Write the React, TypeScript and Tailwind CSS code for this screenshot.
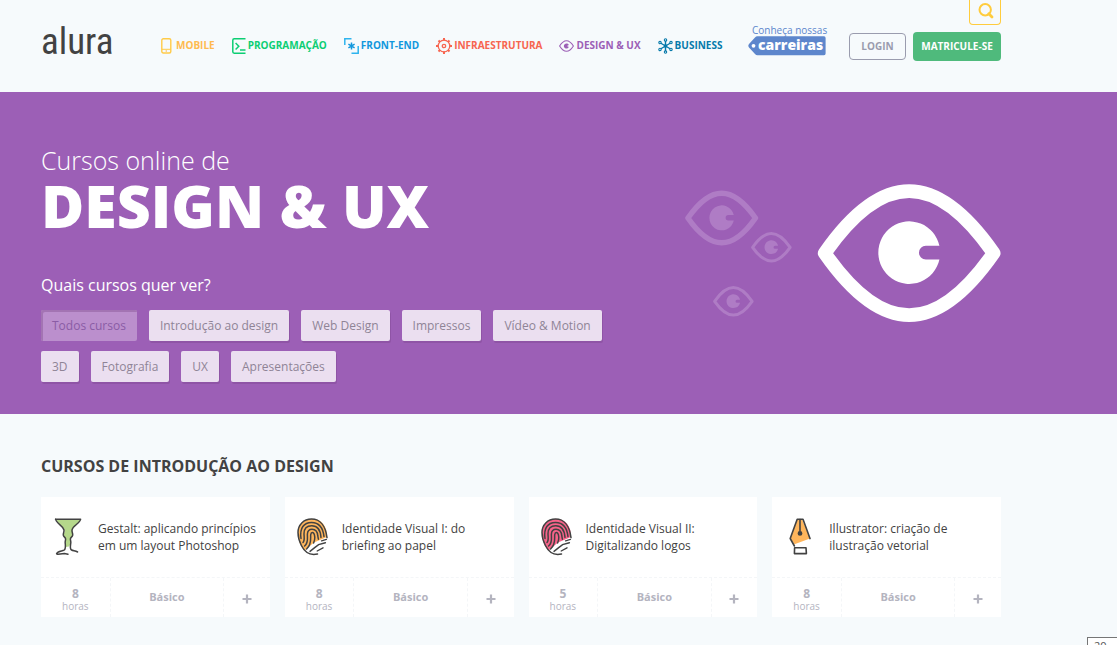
import type { ReactNode } from "react";

type NavItem = { label: string; color: string; icon: ReactNode };

const nav: NavItem[] = [
  {
    label: "MOBILE",
    color: "text-[#ffba4f] gap-1",
    icon: (
      <svg width="11" height="16" viewBox="0 0 11 16" fill="none" stroke="#ffcb48" aria-hidden="true">
        <rect x="0.8" y="0.8" width="9" height="14.2" rx="1.5" strokeWidth="1.4" />
        <path d="M1 11.3h9" strokeWidth="1" />
        <rect x="4.6" y="12.4" width="1.4" height="1.2" fill="#ffba4f" stroke="none" />
      </svg>
    ),
  },
  {
    label: "PROGRAMAÇÃO",
    color: "text-[#0cce73] gap-[2px]",
    icon: (
      <svg width="14" height="16" viewBox="0 0 14 16" fill="none" stroke="currentColor" strokeWidth="1.5" aria-hidden="true">
        <path d="M13.5 0.8H2.2Q0.8 0.8 0.8 2.2V13.8Q0.8 15.2 2.2 15.2H13.5M13.5 12H8" />
        <path d="M3.6 5L6.8 8.2L3.6 11.5" />
      </svg>
    ),
  },
  {
    label: "FRONT-END",
    color: "text-[#1197dd] gap-[2px]",
    icon: (
      <svg width="15" height="16" viewBox="0 0 15 16" fill="none" stroke="currentColor" strokeWidth="1.5" aria-hidden="true">
        <path d="M0.8 7V0.8H7.5M14.2 8V15.2H7.5" stroke="#2eb4ee" />
        <path d="M7.5 4.4V11.6M4.4 6.2L10.6 9.8M10.6 6.2L4.4 9.8" />
      </svg>
    ),
  },
  {
    label: "INFRAESTRUTURA",
    color: "text-[#f76550] gap-[2px]",
    icon: (
      <svg width="16" height="16" viewBox="0 0 16 16" fill="none" stroke="currentColor" aria-hidden="true">
        <circle cx="8" cy="8" r="5.8" strokeWidth="1.3" />
        <circle cx="8" cy="8" r="1.7" strokeWidth="1.3" />
        <path
          d="M8 0V2.4M8 13.6V16M0 8H2.4M13.6 8H16M2.5 2.5L4 4M12 12L13.5 13.5M13.5 2.5L12 4M4 12L2.5 13.5"
          strokeWidth="2"
        />
      </svg>
    ),
  },
  {
    label: "DESIGN & UX",
    color: "text-[#9c5fb6] gap-[2px]",
    icon: (
      <svg width="15" height="12" viewBox="0 0 15 12" fill="none" stroke="currentColor" aria-hidden="true">
        <path d="M0.6 6C3 2.2 5.2 0.7 7.5 0.7S12 2.2 14.4 6C12 9.8 9.8 11.3 7.5 11.3S3 9.8 0.6 6Z" strokeWidth="1.1" strokeLinejoin="round" />
        <path d="M9.9 5.2A2.6 2.6 0 1 0 9.9 6.8H8.6V5.2Z" fill="currentColor" stroke="none" />
      </svg>
    ),
  },
  {
    label: "BUSINESS",
    color: "text-[#077aab] gap-[2px]",
    icon: (
      <svg width="15" height="16" viewBox="0 0 15 16" fill="none" stroke="currentColor" aria-hidden="true">
        <path d="M7.5 2.5V13.5M2.5 5L12.5 11M12.5 5L2.5 11" strokeWidth="1.4" />
        <circle cx="7.5" cy="8" r="1.8" fill="currentColor" stroke="none" />
        <g fill="#f6fafc" strokeWidth="1.1">
          <circle cx="7.5" cy="1.9" r="1.2" />
          <circle cx="7.5" cy="14.1" r="1.2" />
          <circle cx="2" cy="4.6" r="1.2" />
          <circle cx="13" cy="4.6" r="1.2" />
          <circle cx="2" cy="11.4" r="1.2" />
          <circle cx="13" cy="11.4" r="1.2" />
        </g>
      </svg>
    ),
  },
];

const filters = [
  "Todos cursos",
  "Introdução ao design",
  "Web Design",
  "Impressos",
  "Vídeo & Motion",
  "3D",
  "Fotografia",
  "UX",
  "Apresentações",
];

function Vase() {
  return (
    <svg width="42" height="38" viewBox="0 0 42 38" fill="none" stroke="#424242" strokeWidth="1.5" strokeLinecap="round" strokeLinejoin="round" aria-hidden="true">
      <path d="M8.5 1.5H32.5C31.5 6 26 7.5 24.5 12C23.6 14.5 25.2 15.8 25 17.5C24.8 19.3 22.6 19.5 22.8 21C23.2 23 23 26 21 28.5L17.5 29V21C17.7 19.5 15.6 19.3 15.4 17.5C15.2 15.8 17.4 14.5 16.5 12C15 7.5 9.5 6 8.5 1.5Z" fill="#b5d88b" stroke="none" />
      <path d="M7.6 1.2H32.6L31.8 3C29.8 6.5 24.6 8 24 12C23.7 14 25 15.5 24.7 17.2C24.4 19 22.4 19.4 22.4 21C22.4 22.4 23 23.5 22.8 25C22.4 28 21.6 31 23.6 32C25.2 32.8 27.4 32.8 29.6 34" />
      <path d="M7.6 1.2L8.4 3C10.2 6.5 15.2 8 16 12C16.3 14 15 15.5 15.3 17.2C15.6 19 17.6 19.4 17.6 21C17.6 22.4 17 23.5 17.2 25C17.6 28 18 31 16 32.2C14 33.2 9.5 33.2 8.6 35.6Q8.6 36.4 10 36.2L16.5 35.6L20 36.2" />
    </svg>
  );
}

function Fingerprint({ color }: { color: string }) {
  return (
    <svg width="42" height="38" viewBox="0 0 42 38" fill="none" stroke="#424242" strokeWidth="1.5" strokeLinecap="round" aria-hidden="true">
      <path d="M20 1C11 1 6 7.5 6 15C6 22 8.5 29 12.5 32.5L22 24.5L35 19C35 8 30 1 20 1Z" fill={color} stroke="none" />
      <path d="M25.5 36C17 38 12.4 33.5 9.4 27.5C7.4 23.5 6 19 6 14.5C6 7 11.5 1 19.6 1C28 1 33.6 8 35 19.6" />
      <path d="M9 20.5C7.4 10 12 4.4 19.5 4.4C26.8 4.4 31 9.5 32 18.6" />
      <path d="M11 24.5C13 22.5 12 19 12 15.8C12 10.8 15 7.8 19.8 7.8C25 7.8 28.4 11.4 29 19.4" />
      <path d="M12.6 28C16.8 24.4 15.2 19.6 15.4 16C15.6 12.8 17.2 11.2 20 11.2C23.6 11.2 25.6 14 25.8 18L26.4 21.2" />
      <path d="M14.6 31C20 26.4 18.4 20.4 18.7 16.8C18.9 15.2 19.3 14.6 20.2 14.6C22.2 14.6 22.6 17 22.8 19.4C22.9 21.4 22.4 23 21.6 25" />
      <path d="M18 33.4L23 29.4L26.6 26.6L33.4 24.8M25.2 33L31 29.8M29.6 22.8L34.4 21.4" strokeWidth="1.4" />
    </svg>
  );
}

function Pen() {
  return (
    <svg width="42" height="38" viewBox="0 0 42 38" fill="none" stroke="#424242" strokeWidth="1.6" strokeLinecap="round" strokeLinejoin="round" aria-hidden="true">
      <path d="M18.5 1.2H23L31 20.5L15.5 26.2L11.2 20Z" fill="#ffb65c" stroke="none" />
      <path d="M31 20.6L24 1.2H18.2L11.2 20.5L15.4 28" />
      <path d="M21 1.5V13" />
      <circle cx="21" cy="15.4" r="1.6" fill="#424242" />
      <path d="M15.6 29.8H27L27.4 35.6H15.4Z" />
    </svg>
  );
}

type Course = { title: [string, string]; hours: number; icon: ReactNode };

const courses: Course[] = [
  { title: ["Gestalt: aplicando princípios", "em um layout Photoshop"], hours: 8, icon: <Vase /> },
  { title: ["Identidade Visual I: do", "briefing ao papel"], hours: 8, icon: <Fingerprint color="#ffb65c" /> },
  { title: ["Identidade Visual II:", "Digitalizando logos"], hours: 5, icon: <Fingerprint color="#f8638a" /> },
  { title: ["Illustrator: criação de", "ilustração vetorial"], hours: 8, icon: <Pen /> },
];

function EyeShape({ color, transform }: { color: string; transform: string }) {
  return (
    <g transform={transform}>
      <path
        d="M22 207C105 88 190 20.5 276 20.5S447 88 530 207C447 326 362 393.5 276 393.5S105 326 22 207Z"
        fill="none"
        stroke={color}
        strokeWidth="41"
        strokeLinejoin="round"
      />
      <path d="M367 185A93 94 0 1 0 367 226H326A20 20 0 0 1 326 185Z" fill={color} />
    </g>
  );
}

function CourseCard({ title, hours, icon }: Course) {
  return (
    <article className="bg-white">
      <div className="flex h-20 items-center gap-2 pl-[7px]">
        <div className="w-[42px] shrink-0">{icon}</div>
        <h3 className="text-[12px] leading-[17px] text-[#424242]">
          {title[0]}
          <br />
          {title[1]}
        </h3>
      </div>
      <div className="grid h-10 grid-cols-[3fr_5fr_2fr] border-t border-dashed border-[#f4f6f8] text-center text-[#b4b4bf]">
        <p className="flex flex-col items-center justify-center pt-1 text-[12px] leading-3 font-bold">
          {hours}
          <span className="text-[10px] font-normal">horas</span>
        </p>
        <p className="flex items-center justify-center border-x border-dashed border-[#f4f6f8] text-[11px] font-bold">
          Básico
        </p>
        <button type="button" aria-label="Mais detalhes" className="flex items-center justify-center pt-[2px]">
          <svg width="10" height="10" viewBox="0 0 10 10" stroke="currentColor" strokeWidth="2.2" aria-hidden="true">
            <path d="M5 0.5V9.5M0.5 5H9.5" />
          </svg>
        </button>
      </div>
    </article>
  );
}

export default function App() {
  return (
    <div className="relative min-h-screen overflow-hidden bg-[#f6fafc] font-['Open_Sans',sans-serif]">
      <header className="relative ml-[41px] flex h-[92px] max-w-[960px] items-center">
        <a
          href="#"
          className="w-[120px] pb-[8px] font-['Roboto_Condensed','Roboto',sans-serif] text-[37px] leading-10 text-[#424242]"
        >
          alura
        </a>
        <nav className="flex items-center gap-[17px] pb-px">
          {nav.map((item) => (
            <a key={item.label} href="#" className={`flex items-center text-[10px] font-bold whitespace-nowrap ${item.color}`}>
              {item.icon}
              {item.label}
            </a>
          ))}
        </nav>
        <div className="ml-auto flex items-center">
          <a href="#" className="mr-[23px] flex w-[78px] flex-col pb-[13px] text-[#5d86cc]">
            <span className="pl-1 text-[10px] leading-3 whitespace-nowrap">Conheça nossas</span>
            <span className="relative flex h-5 items-center">
              <svg className="absolute inset-0" width="78" height="20" viewBox="0 0 78 20" aria-hidden="true">
                <path
                  d="M7 1.6Q8 0.3 9.5 0.3H76Q77.6 0.3 77.6 2V17.5Q77.6 19.2 76 19.2H9.5Q8 19.2 7 18L1 11.5Q-0.4 9.8 1 8Z"
                  fill="#5d86cc"
                />
                <circle cx="5.5" cy="9.8" r="1.9" fill="#fff" />
              </svg>
              <span className="relative pb-[2px] pl-[10px] text-[14px] leading-4 font-extrabold text-white">carreiras</span>
            </span>
          </a>
          <a
            href="#"
            className="mr-[7px] flex h-[27px] w-[57px] items-center justify-center rounded-[4px] border border-[#9a9cae] text-[10px] font-bold text-[#9a9cae]"
          >
            LOGIN
          </a>
          <a
            href="#"
            className="flex h-[29px] w-[88px] items-center justify-center rounded-[4px] bg-[#4fba7c] text-[10px] font-bold text-white"
          >
            MATRICULE-SE
          </a>
        </div>
        <button
          type="button"
          aria-label="Buscar"
          className="absolute top-0 right-0 flex h-[25px] w-8 items-center justify-center rounded-b-[4px] border border-t-0 border-[#ffcc3d] pb-[2px] pl-[2px] text-[#ffcc3d]"
        >
          <svg width="16" height="16" viewBox="0 0 16 16" fill="none" stroke="currentColor" aria-hidden="true">
            <circle cx="7.2" cy="6.8" r="5.7" strokeWidth="2" />
            <path d="M10.8 10.8L14 14" strokeWidth="2.8" strokeLinecap="round" />
          </svg>
        </button>
      </header>

      <section className="bg-[#9c5fb6]">
        <div className="ml-[41px] flex h-[322px] max-w-[960px] justify-between">
          <div className="w-[570px] pt-[52px]">
            <h1 className="text-white">
              <span className="block text-[25px] leading-8 font-light">Cursos online de</span>
              <span className="block text-[59px] leading-[58px] font-extrabold whitespace-nowrap">DESIGN &amp; UX</span>
            </h1>
            <p className="mt-[39px] text-[16px] leading-6 text-white">Quais cursos quer ver?</p>
            <div className="mt-[13px] flex flex-wrap gap-x-3 gap-y-[10px]">
              {filters.map((name, i) => (
                <button
                  key={name}
                  type="button"
                  aria-pressed={i === 0}
                  className={
                    i === 0
                      ? "h-[31px] rounded-[2px] bg-[#bb8fcd] px-[11px] text-[12px] text-[#8a5ca5] shadow-[inset_2px_2px_0_#a374b3]"
                      : "h-[31px] rounded-[2px] bg-[#ebdff0] px-[11px] text-[12px] text-[#8f8496] shadow-[1px_2px_0_#8f54a6]"
                  }
                >
                  {name}
                </button>
              ))}
            </div>
          </div>
          <svg className="mt-[92px] shrink-0" width="316" height="138" viewBox="0 0 316 138" aria-hidden="true">
            <EyeShape color="#af7cc5" transform="translate(0 6.5) scale(0.133)" />
            <EyeShape color="#af7cc5" transform="translate(66 48) scale(0.0738)" />
            <EyeShape color="#af7cc5" transform="translate(28 102) scale(0.0738)" />
            <EyeShape color="#ffffff" transform="translate(132.4 0.3) scale(0.3325)" />
          </svg>
        </div>
      </section>

      <main className="ml-[41px] max-w-[960px] pt-10">
        <h2 className="text-[16px] leading-6 font-bold text-[#424242]">CURSOS DE INTRODUÇÃO AO DESIGN</h2>
        <div className="mt-[19px] grid grid-cols-4 gap-[15px]">
          {courses.map((course) => (
            <CourseCard key={course.title[0]} {...course} />
          ))}
        </div>
      </main>

      <output className="absolute right-0 bottom-0 h-2 w-[30px] overflow-hidden border-t border-l border-[#767676] bg-white pt-[2px] pl-[6px] text-[11px] leading-3 text-[#575757]">
        20
      </output>
    </div>
  );
}
